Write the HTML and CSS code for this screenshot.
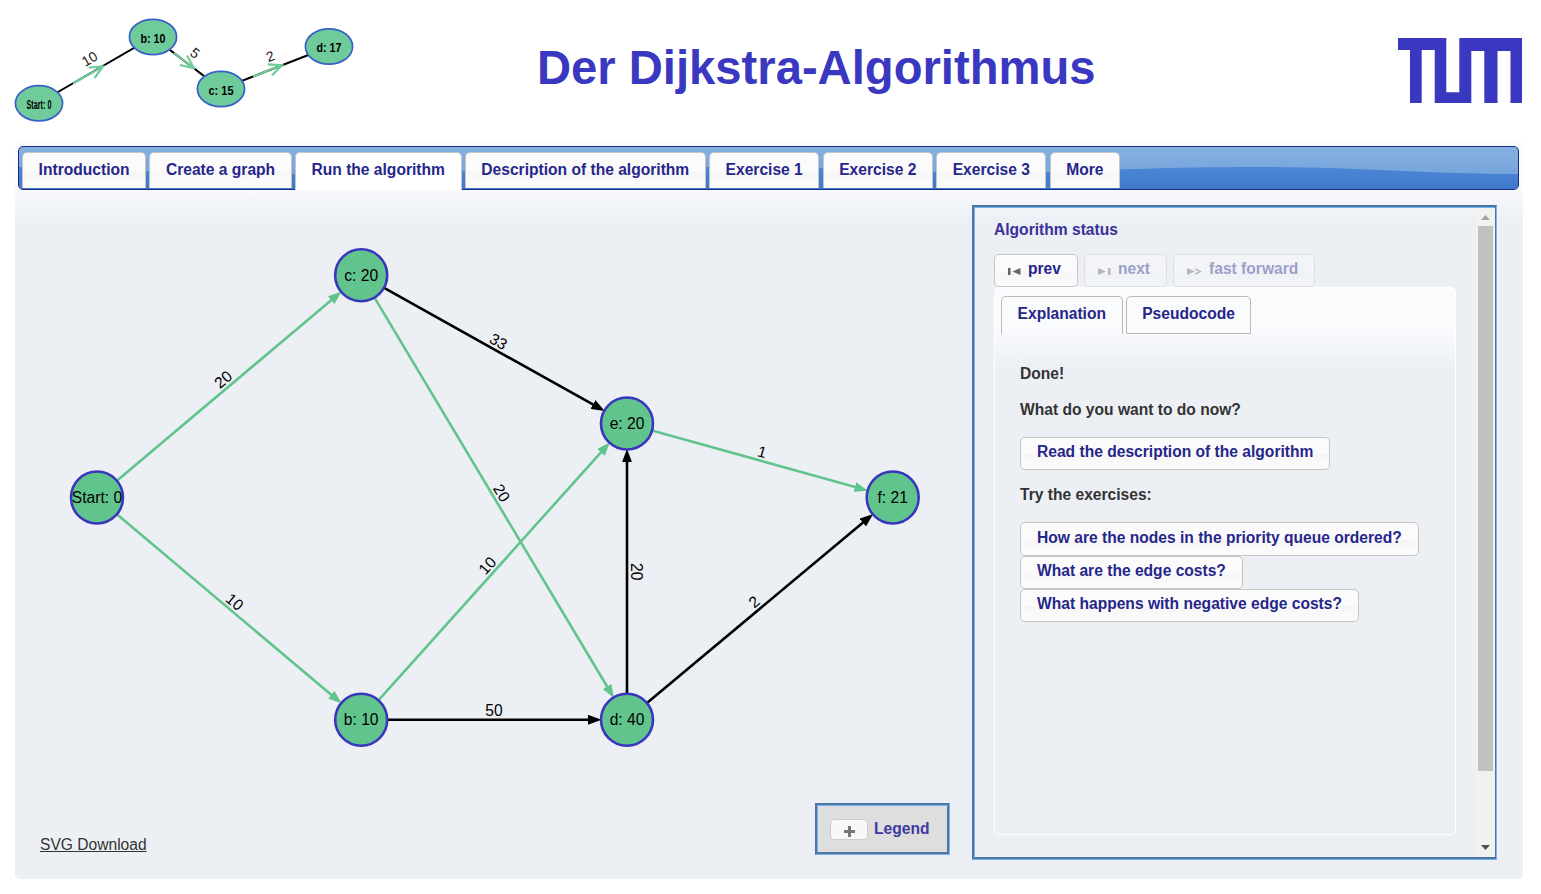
FILE: index.html
```html
<!DOCTYPE html>
<html lang="en">
<head>
<meta charset="utf-8">
<title>Der Dijkstra-Algorithmus</title>
<link rel="stylesheet" href="styles.css">
</head>
<body>
<header class="header">
  <svg class="logo" width="370" height="135" viewBox="0 0 370 135">
    <defs>
      <marker id="open" markerUnits="userSpaceOnUse" markerWidth="16" markerHeight="14" refX="13" refY="7" orient="auto">
        <path class="logo-arrow" d="M1 1 L14 7 L1 13"/>
      </marker>
    </defs>
    <path class="logo-line" d="M39 103 L153 37 L221 89 L329 47"/>
    <path class="logo-arrow" marker-end="url(#open)" d="M73 83.500 L102 67"/>
    <path class="logo-arrow" marker-end="url(#open)" d="M174 53 L193 67.500"/>
    <path class="logo-arrow" marker-end="url(#open)" d="M253 76.500 L281 65.500"/>
    <ellipse class="logo-node" cx="39" cy="103.300" rx="23.600" ry="17.600"/>
    <ellipse class="logo-node" cx="153" cy="37" rx="23.600" ry="17.600"/>
    <ellipse class="logo-node" cx="221" cy="89" rx="23.600" ry="17.600"/>
    <ellipse class="logo-node" cx="329" cy="46.500" rx="23.600" ry="17.600"/>
    <g class="logo-name">
      <text x="39" y="108.500" textLength="25" lengthAdjust="spacingAndGlyphs">Start: 0</text>
      <text x="153" y="42.500" textLength="25" lengthAdjust="spacingAndGlyphs">b: 10</text>
      <text x="221" y="94.500" textLength="25" lengthAdjust="spacingAndGlyphs">c: 15</text>
      <text x="329" y="52" textLength="25" lengthAdjust="spacingAndGlyphs">d: 17</text>
    </g>
    <g class="logo-cost">
      <text transform="translate(92 63) rotate(-30)">10</text>
      <text transform="translate(192 57) rotate(38)">5</text>
      <text transform="translate(272 61) rotate(-20)">2</text>
    </g>
  </svg>
  <h1 class="title">Der Dijkstra-Algorithmus</h1>
  <svg class="tum" width="124" height="65" viewBox="0 0 124 65"><path d="M0 0H48.300V54.300H61.300V0H124V65H112.500V13H99.500V65H86.300V13H73.300V65H36.700V12H23.700V65H12V12H0Z"/></svg>
</header>

<main class="panel">
  <nav class="nav">
    <svg class="wave" viewBox="0 0 1500 42" preserveAspectRatio="none">
      <defs>
        <linearGradient id="deep" x1="0" y1="19" x2="0" y2="42" gradientUnits="userSpaceOnUse"><stop offset="0" stop-color="#4c87d4"/><stop offset="1" stop-color="#4078cd"/></linearGradient>
      </defs>
      <path fill="url(#deep)" d="M0 20 C80 21 150 27 275 27 C420 27 520 20 690 20 C850 20 920 27 1000 26 C1090 23 1150 20 1240 20 C1340 20 1410 27 1500 27 V42 H0Z"/>
    </svg>
    <a class="tab">Introduction</a>
    <a class="tab">Create a graph</a>
    <a class="tab tab-active">Run the algorithm</a>
    <a class="tab">Description of the algorithm</a>
    <a class="tab">Exercise 1</a>
    <a class="tab">Exercise 2</a>
    <a class="tab">Exercise 3</a>
    <a class="tab">More</a>
  </nav>
  <div class="work">
    <section class="canvas">
      <svg class="graph" width="940" height="600" viewBox="15 200 940 600">
        <defs>
          <marker id="head-black" markerUnits="userSpaceOnUse" markerWidth="14" markerHeight="10" refX="3" refY="5" orient="auto"><path d="M0 0 L13.500 5 L0 10Z" fill="#000"/></marker>
          <marker id="head-green" markerUnits="userSpaceOnUse" markerWidth="14" markerHeight="10" refX="3" refY="5" orient="auto"><path d="M0 0 L13.500 5 L0 10Z" fill="#62c48d"/></marker>
        </defs>
        <g class="edge">
          <path transform="translate(361 275) rotate(29.170)" d="M26 0H268.600"/>
          <path transform="translate(361 719.750) rotate(.001)" d="M26 0H230"/>
          <path transform="translate(627 719.750) rotate(-90)" d="M26 0H260.500"/>
          <path transform="translate(627 719.750) rotate(-39.900)" d="M26 0H310.400"/>
        </g>
        <g class="edge edge-path">
          <path transform="translate(97 497.500) rotate(-40.120)" d="M26 0H309.300"/>
          <path transform="translate(97 497.500) rotate(40.100)" d="M26 0H309.300"/>
          <path transform="translate(361 275) rotate(59.120)" d="M26 0H482.400"/>
          <path transform="translate(361 719.750) rotate(-48.100)" d="M26 0H362.300"/>
          <path transform="translate(627 423.500) rotate(15.580)" d="M26 0H239.600"/>
        </g>
        <g class="node">
          <circle cx="97" cy="497.500" r="26"/><circle cx="361.200" cy="275.200" r="26"/><circle cx="361.200" cy="719.700" r="26"/>
          <circle cx="627" cy="423.500" r="26"/><circle cx="627" cy="719.700" r="26"/><circle cx="892.700" cy="497.500" r="26"/>
        </g>
        <g class="label">
          <text x="97" y="503">Start: 0</text><text x="361.200" y="280.700">c: 20</text><text x="361.200" y="725.200">b: 10</text>
          <text x="627" y="429">e: 20</text><text x="627" y="725.200">d: 40</text><text x="892.700" y="503">f: 21</text>
          <text transform="translate(229 386.250) rotate(-40.100)" y="-3.500">20</text>
          <text transform="translate(229 608.700) rotate(40.100)" y="-3.500">10</text>
          <text transform="translate(494 349.250) rotate(29.200)" y="-3.500">33</text>
          <text transform="translate(494 497.500) rotate(59.100)" y="-3.500">20</text>
          <text transform="translate(494 571.700) rotate(-48.100)" y="-3.500">10</text>
          <text x="494" y="716.200">50</text>
          <text transform="translate(627 571.700) rotate(90)" y="-3.500">20</text>
          <text transform="translate(759.800 460.500) rotate(15.600)" y="-3.500">1</text>
          <text transform="translate(759.800 608.700) rotate(-39.900)" y="-3.500">2</text>
        </g>
      </svg>
      <div class="canvas-foot">
        <a class="download">SVG Download</a>
        <div class="legend">
          <span class="legend-toggle"><svg width="11" height="11" viewBox="0 0 11 11"><path d="M5.500 0V11M0 5.500H11" stroke="#777" stroke-width="3"/></svg></span>
          <span>Legend</span>
        </div>
      </div>
    </section>
    <aside class="status">
      <div class="status-body">
        <h2 class="status-title">Algorithm status</h2>
        <div class="controls">
          <button class="btn control"><svg width="13" height="7" viewBox="0 0 13 7"><path d="M0 0H2.500V7H0ZM12.500 0V7L4.500 3.500Z"/></svg>prev</button>
          <button class="btn control off"><svg width="13" height="7" viewBox="0 0 13 7"><path d="M0 0V7L8 3.500ZM10 0H12.500V7H10Z"/></svg>next</button>
          <button class="btn control off"><svg width="15" height="7" viewBox="0 0 15 7"><path d="M0 0V7L8 3.500ZM8 0L15 3.500L8 7V5.300L12 3.500L8 1.700Z"/></svg>fast forward</button>
        </div>
        <div class="box">
          <div class="subtabs"><a class="subtab subtab-active">Explanation</a><a class="subtab">Pseudocode</a></div>
          <div class="text">
            <p>Done!</p>
            <p>What do you want to do now?</p>
            <button class="btn read">Read the description of the algorithm</button>
            <p>Try the exercises:</p>
            <div class="exercises">
              <button class="btn">How are the nodes in the priority queue ordered?</button>
              <button class="btn">What are the edge costs?</button>
              <button class="btn">What happens with negative edge costs?</button>
            </div>
          </div>
        </div>
      </div>
      <div class="scroll">
        <svg class="arrow-up" width="9" height="5" viewBox="0 0 9 5"><path d="M4.500 0L9 5H0Z"/></svg>
        <div class="thumb"></div>
        <svg class="arrow-down" width="9" height="5" viewBox="0 0 9 5"><path d="M4.500 5L9 0H0Z"/></svg>
      </div>
    </aside>
  </div>
</main>
</body>
</html>
```
FILE: styles.css
```css
* { box-sizing: border-box; }
body { margin: 0; width: 1541px; height: 894px; overflow: hidden; background: #fff; color: #333; font: 15.6px/18px "Liberation Sans", Arial, sans-serif; }
svg { display: block; flex: none; }

.header { display: flex; align-items: flex-start; height: 142px; }
.logo-line { fill: none; stroke: #000; stroke-width: 2; }
.logo-arrow { fill: none; stroke: #6fcb9a; stroke-width: 2.2; }
.logo-node { fill: #6fcb9a; stroke: #3960c8; stroke-width: 1.7; }
.logo-name { font: bold 13px "Liberation Sans", Arial, sans-serif; text-anchor: middle; }
.logo-cost { font: 14px "Liberation Sans", Arial, sans-serif; text-anchor: middle; fill: #222; }
.title { margin: 40px 0 0 167px; width: 861px; font-size: 47.2px; line-height: 56px; color: #3a38c0; white-space: nowrap; }
.tum { margin-top: 38px; fill: #3a38c0; }

.panel { margin-left: 15px; width: 1508px; height: 737px; padding: 4px 4px 0 3px; border-radius: 5px; background: #ecf0f5 linear-gradient(#fafbfd 0, #fafbfd 45px, #ecf0f5 78px); }

.nav { position: relative; display: flex; gap: 3.2px; height: 44px; padding: 5px 3px 0; border: 1px solid #1b2a86; border-radius: 5px; background: linear-gradient(#86b0e1, #74a4dc 70%); }
.wave { position: absolute; left: 0; top: 0; width: 100%; height: 100%; border-radius: 4px; }
.tab { position: relative; height: 36px; padding: 8px 15.6px 0; border: 1px solid #c5c5c5; border-bottom: 0; border-radius: 5px 5px 0 0; background: linear-gradient(#fbfbfb 50%, #f6f6f6 55%, #fcfcfc); color: #26268a; font-weight: bold; white-space: nowrap; }
.tab-active { height: 38px; background: #fff; }

.work { display: flex; }
.canvas { width: 954px; padding: 10px 0 0; margin-left: -3px; }
.edge path { fill: none; stroke: #000; stroke-width: 2.6; marker-end: url(#head-black); }
.edge-path path { stroke: #62c48d; marker-end: url(#head-green); }
.node { fill: #62c48d; stroke: #3936be; stroke-width: 2.6; }
.label { font: 15.6px "Liberation Sans", Arial, sans-serif; text-anchor: middle; fill: #000; }
.canvas-foot { display: flex; justify-content: space-between; padding: 3px 19px 0 25px; }
.download { margin-top: 33px; text-decoration: underline; }
.legend { display: flex; align-items: center; gap: 6px; width: 135px; height: 52px; padding-left: 12px; border: 3px groove #78b4f5; background: #dedede; color: #403a9f; font-weight: bold; }
.legend-toggle { display: grid; place-items: center; width: 38px; height: 21px; padding-top: 3px; margin-top: 1px; border: 1px solid #ccc; border-radius: 4px; background: #f8f8f8; }

.status { display: flex; margin: 15px 0 0 3px; width: 525px; height: 655px; border: 3px groove #78b4f5; }
.status-body { width: 501px; padding: 13px 20px 0 19px; }
.status-title { margin: 0; font-size: 15.6px; line-height: 18px; color: #3a309a; }
.controls { display: flex; gap: 6px; margin-top: 15px; }
.btn { display: block; height: 33px; padding: 0 16px 3px; border: 1px solid #c5c5c5; border-radius: 5px; background: linear-gradient(#fbfbfb 50%, #f6f6f6 55%, #fcfcfc); color: #26268a; font: bold 15.6px/18px "Liberation Sans", Arial, sans-serif; white-space: nowrap; }
.control { display: flex; align-items: center; gap: 7px; padding-left: 13px; }
.control svg { margin-top: 4px; fill: #666; }
.off { opacity: .4; }
.box { width: 462px; height: 548px; padding: 8px 6px; border: 1px solid #fff; border-radius: 5px; background: linear-gradient(#fafbfd 0, #fafbfd 40px, #ecf0f5 78px); }
.subtabs { display: flex; gap: 3px; }
.subtab { height: 38px; padding: 8px 15.6px 0; border: 1px solid #b9b9b9; border-radius: 5px 5px 0 0; color: #26268a; font-weight: bold; }
.subtab-active { border-bottom: 0; }
.text { padding: 31px 19px 0; color: #333; font-weight: bold; }
.text p { margin: 0 0 18px; }
.read { margin-bottom: 16px; }
.exercises { display: flex; flex-direction: column; align-items: flex-start; }
.exercises .btn:first-child { height: 34px; }
.scroll { display: flex; flex-direction: column; align-items: center; width: 19px; height: 649px; padding: 7px 2px; margin-right: -1px; background: #f1f1f1; }
.thumb { width: 15px; height: 545px; margin-top: 6px; background: #c1c1c1; }
.arrow-up { fill: #a3a3a3; }
.arrow-down { margin-top: auto; fill: #505050; }
```
